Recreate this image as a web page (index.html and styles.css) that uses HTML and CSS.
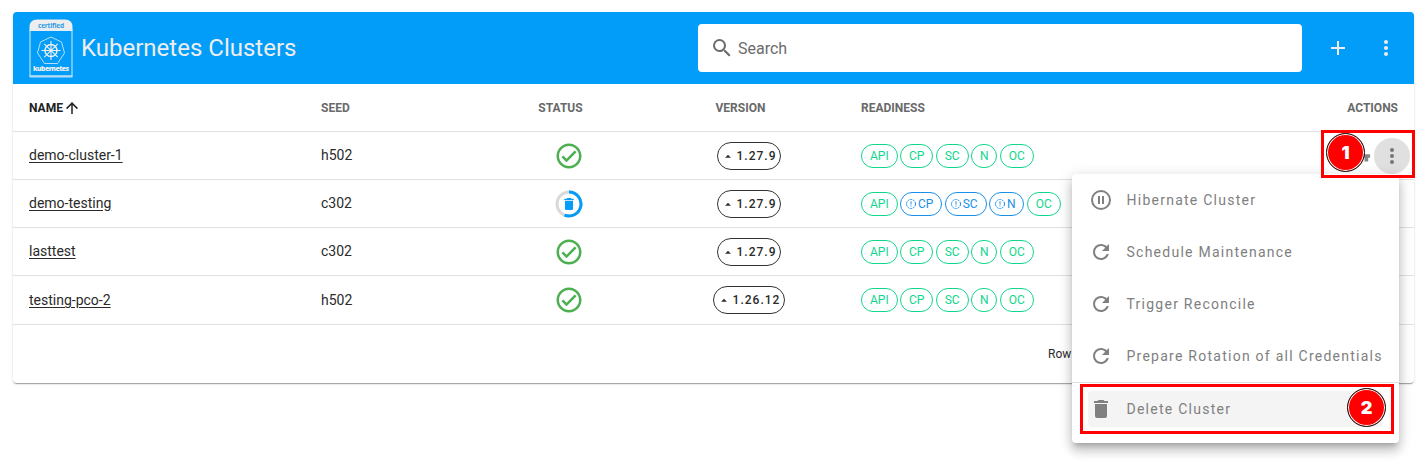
FILE: index.html
```html
<!DOCTYPE html>
<html lang="en">
<head>
<meta charset="utf-8">
<title>Kubernetes Clusters</title>
<link rel="stylesheet" href="styles.css">
</head>
<body>
<svg class="defs" width="0" height="0" aria-hidden="true">
  <symbol id="check" viewBox="0 0 24 24"><path fill="currentColor" d="M12 2C6.500 2 2 6.500 2 12S6.500 22 12 22 22 17.500 22 12 17.500 2 12 2M12 20C7.590 20 4 16.410 4 12S7.590 4 12 4 20 7.590 20 12 16.410 20 12 20M16.590 7.580L10 14.170L7.410 11.590L6 13L10 17L18 9L16.590 7.580Z"/></symbol>
  <symbol id="dots" viewBox="0 0 24 24"><path fill="currentColor" d="M12 16A2 2 0 0 1 14 18A2 2 0 0 1 12 20A2 2 0 0 1 10 18A2 2 0 0 1 12 16M12 10A2 2 0 0 1 14 12A2 2 0 0 1 12 14A2 2 0 0 1 10 12A2 2 0 0 1 12 10M12 4A2 2 0 0 1 14 6A2 2 0 0 1 12 8A2 2 0 0 1 10 6A2 2 0 0 1 12 4Z"/></symbol>
  <symbol id="trash" viewBox="0 0 24 24"><path fill="currentColor" d="M19 4H15.500L14.500 3H9.500L8.500 4H5V6H19M6 19A2 2 0 0 0 8 21H16A2 2 0 0 0 18 19V7H6V19Z"/></symbol>
  <symbol id="refresh" viewBox="0 0 24 24"><path fill="currentColor" d="M17.650 6.350C16.200 4.900 14.210 4 12 4A8 8 0 0 0 4 12A8 8 0 0 0 12 20C15.730 20 18.840 17.450 19.730 14H17.650C16.830 16.330 14.610 18 12 18A6 6 0 0 1 6 12A6 6 0 0 1 12 6C13.660 6 15.140 6.690 16.220 7.780L13 11H20V4L17.650 6.350Z"/></symbol>
  <symbol id="up" viewBox="0 0 24 24"><path fill="currentColor" d="M7 15L12 10L17 15H7Z"/></symbol>
  <symbol id="alert" viewBox="0 0 12 12"><circle cx="6" cy="6" r="4.500" fill="none" stroke="currentColor" stroke-width="1" stroke-dasharray="2.100 .730"/><path fill="currentColor" d="M5.500 3.300h1v3.200h-1zM5.500 7.500h1v1h-1z"/></symbol>
</svg>

<main class="card">
  <header class="toolbar">
    <svg class="logo" viewBox="0 0 44 59">
      <path class="logo-cap" d="M.5 12V8Q.5 .5 8 .5H36Q43.500 .5 43.500 8V12Z"/>
      <rect class="logo-frame" x="1" y="11" width="42" height="46"/>
      <path class="logo-foot" d="M.5 56.500H43.500V58.500H.5Z"/>
      <text class="logo-certified" x="22" y="8.700" textLength="26">certified</text>
      <path class="logo-line" d="M22 18L32.500 23L35.500 34L28.500 44.500H15.500L8.500 34L11.500 23Z"/>
      <circle class="logo-wheel" cx="22" cy="31.500" r="6"/>
      <path class="logo-spokes" d="M22 22V41M12.500 31.500H31.500M15.300 24.800L28.700 38.200M28.700 24.800L15.300 38.200"/>
      <circle class="logo-hub" cx="22" cy="31.500" r="1.600"/>
      <text class="logo-name" x="22" y="51.500" textLength="36">kubernetes</text>
    </svg>
    <h1 class="title">Kubernetes Clusters</h1>
    <div class="search">
      <svg class="search-icon" viewBox="0 0 24 24"><path fill="currentColor" d="M9.500 3A6.500 6.500 0 0 1 16 9.500C16 11.110 15.410 12.590 14.440 13.730L14.710 14H15.500L20.500 19L19 20.500L14 15.500V14.710L13.730 14.440C12.590 15.410 11.110 16 9.500 16A6.500 6.500 0 0 1 3 9.500A6.500 6.500 0 0 1 9.500 3M9.500 5C7 5 5 7 5 9.500S7 14 9.500 14 14 12 14 9.500 12 5 9.500 5Z"/></svg>
      <span>Search</span>
    </div>
    <div class="tools">
      <svg class="icon" viewBox="0 0 24 24"><path fill="currentColor" d="M19 13H13V19H11V13H5V11H11V5H13V11H19V13Z"/></svg>
      <svg class="icon"><use href="#dots"/></svg>
    </div>
  </header>

  <div class="row head">
    <div class="cell sorted">NAME<svg class="sort" viewBox="0 0 24 24"><path fill="currentColor" d="M13 20H11V8L5.500 13.500L4.080 12.080L12 4.160L19.920 12.080L18.500 13.500L13 8V20Z"/></svg></div>
    <div class="cell">SEED</div>
    <div class="cell center sortable">STATUS</div>
    <div class="cell center sortable">VERSION</div>
    <div class="cell">READINESS</div>
    <div class="cell end">ACTIONS</div>
  </div>

  <div class="row">
    <div class="cell text"><a class="link">demo-cluster-1</a></div>
    <div class="cell text">h502</div>
    <div class="cell center"><svg class="status"><use href="#check"/></svg></div>
    <div class="cell center"><span class="version"><svg><use href="#up"/></svg>1.27.9</span></div>
    <div class="cell chips"><span class="chip">API</span><span class="chip">CP</span><span class="chip">SC</span><span class="chip">N</span><span class="chip">OC</span></div>
    <div class="cell end actions"><svg class="key" viewBox="0 0 24 24"><path fill="currentColor" d="M7 14A2 2 0 1 1 7 10A2 2 0 0 1 7 14M12.650 10A6 6 0 1 0 12.650 14H17V18H21V14H23V10H12.650Z"/></svg><span class="more"><svg class="icon"><use href="#dots"/></svg></span></div>
  </div>
  <div class="row">
    <div class="cell text"><a class="link">demo-testing</a></div>
    <div class="cell text">c302</div>
    <div class="cell center"><svg class="progress" viewBox="0 0 28 28"><circle class="track" cx="14" cy="14" r="12"/><path class="bar" d="M14 2A12 12 0 1 1 9.500 25.120"/><use href="#trash" x="6" y="6" width="16" height="16"/></svg></div>
    <div class="cell center"><span class="version"><svg><use href="#up"/></svg>1.27.9</span></div>
    <div class="cell chips"><span class="chip">API</span><span class="chip busy"><svg><use href="#alert"/></svg>CP</span><span class="chip busy"><svg><use href="#alert"/></svg>SC</span><span class="chip busy"><svg><use href="#alert"/></svg>N</span><span class="chip">OC</span></div>
  </div>
  <div class="row">
    <div class="cell text"><a class="link">lasttest</a></div>
    <div class="cell text">c302</div>
    <div class="cell center"><svg class="status"><use href="#check"/></svg></div>
    <div class="cell center"><span class="version"><svg><use href="#up"/></svg>1.27.9</span></div>
    <div class="cell chips"><span class="chip">API</span><span class="chip">CP</span><span class="chip">SC</span><span class="chip">N</span><span class="chip">OC</span></div>
  </div>
  <div class="row last">
    <div class="cell"><a class="link">testing-pco-2</a></div>
    <div class="cell">h502</div>
    <div class="cell center"><svg class="status"><use href="#check"/></svg></div>
    <div class="cell center"><span class="version"><svg><use href="#up"/></svg>1.26.12</span></div>
    <div class="cell chips"><span class="chip">API</span><span class="chip">CP</span><span class="chip">SC</span><span class="chip">N</span><span class="chip">OC</span></div>
  </div>
  <footer class="footer">Row</footer>
</main>

<nav class="menu">
  <div class="item"><svg class="icon" viewBox="0 0 24 24"><path fill="currentColor" d="M13 16V8H15V16H13M9 16V8H11V16H9M12 2A10 10 0 0 1 22 12A10 10 0 0 1 12 22A10 10 0 0 1 2 12A10 10 0 0 1 12 2M12 4A8 8 0 0 0 4 12A8 8 0 0 0 12 20A8 8 0 0 0 20 12A8 8 0 0 0 12 4Z"/></svg>Hibernate Cluster</div>
  <div class="item"><svg class="icon"><use href="#refresh"/></svg>Schedule Maintenance</div>
  <div class="item"><svg class="icon"><use href="#refresh"/></svg>Trigger Reconcile</div>
  <div class="item"><svg class="icon"><use href="#refresh"/></svg>Prepare Rotation of all Credentials</div>
  <div class="danger"><div class="item active"><svg class="icon"><use href="#trash"/></svg>Delete Cluster</div></div>
</nav>

<div class="mark mark-one"></div>
<div class="mark mark-two"></div>
<div class="badge badge-one">1</div>
<div class="badge badge-two">2</div>
</body>
</html>
```
FILE: styles.css
```css
* { box-sizing: border-box; }
body {
  margin: 0;
  padding: 12px 13px;
  height: 473px;
  overflow: hidden;
  background: #fff;
  font-family: Roboto, sans-serif;
  font-size: 14px;
  color: #2a2a2a;
}
.defs { position: absolute; }
svg { display: block; flex: none; }
.icon { width: 24px; height: 24px; }

.card {
  width: 1401px;
  height: 371px;
  border-radius: 4px;
  background: #fff;
  box-shadow: 0 2px 1px -1px rgba(0,0,0,.2), 0 1px 1px rgba(0,0,0,.14), 0 1px 3px rgba(0,0,0,.12);
}
.toolbar {
  display: flex;
  align-items: center;
  height: 72px;
  padding-left: 16px;
  border-radius: 4px 4px 0 0;
  background: #029cf9;
  color: #eee;
}
.logo { width: 44px; height: 59px; }
.logo-cap { fill: #eee; }
.logo-frame { fill: none; stroke: #d8ebf7; }
.logo-foot { fill: #b5dcf5; }
.logo-certified { fill: #2b9de4; font: 700 6.5px "Open Sans", sans-serif; text-anchor: middle; }
.logo-line { fill: none; stroke: #b9def6; }
.logo-wheel { fill: none; stroke: #eee; stroke-width: 1.5; }
.logo-spokes { fill: none; stroke: #eee; stroke-width: 1.1; }
.logo-hub { fill: #eee; }
.logo-name { fill: #eee; font: 800 6.8px "Open Sans", sans-serif; text-anchor: middle; }
.title {
  flex: none;
  width: 617px;
  margin: 0 0 0 8px;
  font-size: 24px;
  line-height: 32px;
  font-weight: 400;
}
.search {
  display: flex;
  align-items: center;
  gap: 4px;
  width: 604px;
  height: 48px;
  padding-left: 12px;
  border-radius: 4px;
  background: #fff;
  color: #6c6c6c;
  font-size: 16px;
}
.search-icon { width: 24px; height: 24px; }
.tools { display: flex; gap: 24px; padding-left: 24px; }

.row {
  display: grid;
  grid-template-columns: 292px 180px 168px 192px 340px 229px;
  height: 48px;
  border-bottom: 1px solid #e0e0e0;
}
.row.last { height: 49px; }
.cell { display: flex; align-items: center; padding: 0 16px; }
.text { padding-bottom: 2px; }
.center { justify-content: center; }
.end { justify-content: flex-end; }
.head { font-size: 12px; font-weight: 700; color: #6a6a6a; }
.sorted { color: #212121; }
.sort { width: 18px; height: 18px; }
.sortable { padding-right: 33px; }
.link { text-decoration: underline; text-underline-offset: 2px; }
.status { width: 30px; height: 30px; color: #4caf50; }
.progress { width: 28px; height: 28px; color: #029cf9; }
.track { fill: none; stroke: #d9d9d9; stroke-width: 3; }
.bar { fill: none; stroke: #029cf9; stroke-width: 3; }
.version {
  display: flex;
  align-items: center;
  height: 28px;
  padding: 0 4px 0 3px;
  border: 1px solid #333;
  border-radius: 14px;
  font-size: 12px;
  font-weight: 500;
  letter-spacing: 1px;
}
.version svg { width: 14px; height: 14px; margin-right: 2px; }
.chips { gap: 2.3px; }
.chip {
  display: flex;
  align-items: center;
  height: 24px;
  padding: 0 8px;
  border: 1px solid #10d78b;
  border-radius: 12px;
  font-size: 12px;
  color: #10d78b;
}
.busy { padding-left: 4px; border-color: #1890ea; color: #1890ea; }
.busy svg { width: 12px; height: 12px; margin-right: 1px; }
.actions { padding-right: 4px; }
.key { width: 22px; height: 22px; margin-right: 3px; color: #868686; }
.more {
  display: grid;
  place-items: center;
  width: 36px;
  height: 36px;
  border-radius: 50%;
  background: #e0e0e0;
  color: #757575;
}
.footer { display: flex; align-items: center; height: 58px; padding-left: 1035px; font-size: 12px; }

.menu {
  position: absolute;
  left: 1072px;
  top: 174px;
  width: 327px;
  height: 269px;
  border-radius: 4px;
  background: #fff;
  color: #808080;
  box-shadow: 0 5px 5px -3px rgba(0,0,0,.2), 0 8px 10px 1px rgba(0,0,0,.14), 0 3px 14px 2px rgba(0,0,0,.12);
}
.item {
  display: flex;
  align-items: center;
  gap: 13.5px;
  height: 52px;
  padding-left: 17px;
  letter-spacing: 1.25px;
  white-space: nowrap;
}
.danger { padding: 8px 16px; border-top: 1px solid #e0e0e0; }
.active { height: 36px; padding-left: 1px; border-radius: 4px; background: #f4f4f4; }

.mark { position: absolute; border: 3px solid #f00; }
.mark-one { left: 1321px; top: 130px; width: 94px; height: 48px; }
.mark-two { left: 1080px; top: 384px; width: 314px; height: 50px; }
.badge {
  position: absolute;
  display: grid;
  place-items: center;
  width: 39px;
  height: 39px;
  border: 1px solid #111;
  border-radius: 50%;
  background: #f00;
  box-shadow: inset 0 0 0 1px #fff;
  color: #fff;
  font: 900 18px Inter, sans-serif;
}
.badge-one { left: 1326px; top: 133px; }
.badge-two { left: 1347px; top: 388px; }
```
